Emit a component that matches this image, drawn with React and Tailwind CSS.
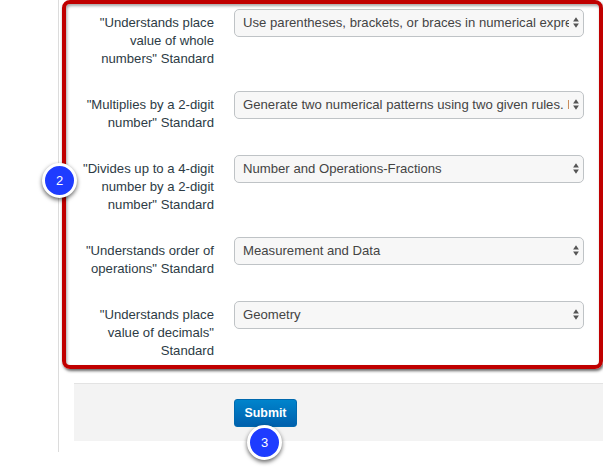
import React from 'react'

const rows = [
  { label: '"Understands place value of whole numbers" Standard', value: 'Use parentheses, brackets, or braces in numerical expressions, and evaluate expressions' },
  { label: '"Multiplies by a 2-digit number" Standard', value: 'Generate two numerical patterns using two given rules. Identify relationships' },
  { label: '"Divides up to a 4-digit number by a 2-digit number" Standard', value: 'Number and Operations-Fractions' },
  { label: '"Understands order of operations" Standard', value: 'Measurement and Data' },
  { label: '"Understands place value of decimals" Standard', value: 'Geometry' },
]

const Arrows = () => (
  <svg width="6" height="11" viewBox="0 0 6 11" className="absolute right-[5px] top-[8px] pointer-events-none">
    <path d="M3 0.3 L5.9 4.6 H0.1 Z M3 10.7 L5.9 6.4 H0.1 Z" fill="#555" />
  </svg>
)

const Badge = ({ n, className }) => (
  <div className={`absolute w-[35px] h-[35px] rounded-full bg-[#1e3cff] border-[3px] border-white flex items-center justify-center text-white text-[13px] shadow-[0_2px_4px_rgba(0,0,0,0.6)] ${className}`}>
    {n}
  </div>
)

const App = () => {
  return (
    <div className="relative w-[603px] h-[472px] overflow-hidden bg-white [font-family:'Liberation_Sans',Arial,sans-serif] text-[13.15px] leading-[18px] text-[#2d3b45]">
      <div className="ml-[58px] h-[452px] border-l border-[#dcdcdc] pl-[3px]">
        <div className="flex flex-col gap-[23px] w-[541px] border-[4px] border-[#c00000] rounded-[8px] py-[5px] pl-[8px] shadow-[1px_2px_3px_rgba(0,0,0,0.6),inset_1px_2px_3px_rgba(0,0,0,0.35)]">
          {rows.map((row) => (
            <div key={row.value} className="flex gap-[20px]">
              <label className="w-[140px] pt-[5px] text-right">{row.label}</label>
              <div className="relative w-[350px] h-[28px]">
                <select className="w-full h-full appearance-none rounded-[5px] border border-[#bfc3c6] bg-[#f7f7f7] pl-[8px] pr-[14px] text-[13.15px] text-[#444]">
                  <option>{row.value}</option>
                </select>
                <Arrows />
              </div>
            </div>
          ))}
        </div>
        <div className="ml-[12px] mt-[14px] flex border-t border-[#e3e3e3] bg-[#f3f3f3] pt-[15px] pb-[14px] pl-[160px]">
          <button className="w-[63px] h-[28px] rounded-[3px] border border-[#0069ae] bg-gradient-to-b from-[#0084cc] to-[#0060ad] text-white font-bold text-[12.4px]">
            Submit
          </button>
        </div>
      </div>
      <Badge n="2" className="left-[42px] top-[163px]" />
      <Badge n="3" className="left-[247px] top-[425px]" />
    </div>
  )
}

export default App
